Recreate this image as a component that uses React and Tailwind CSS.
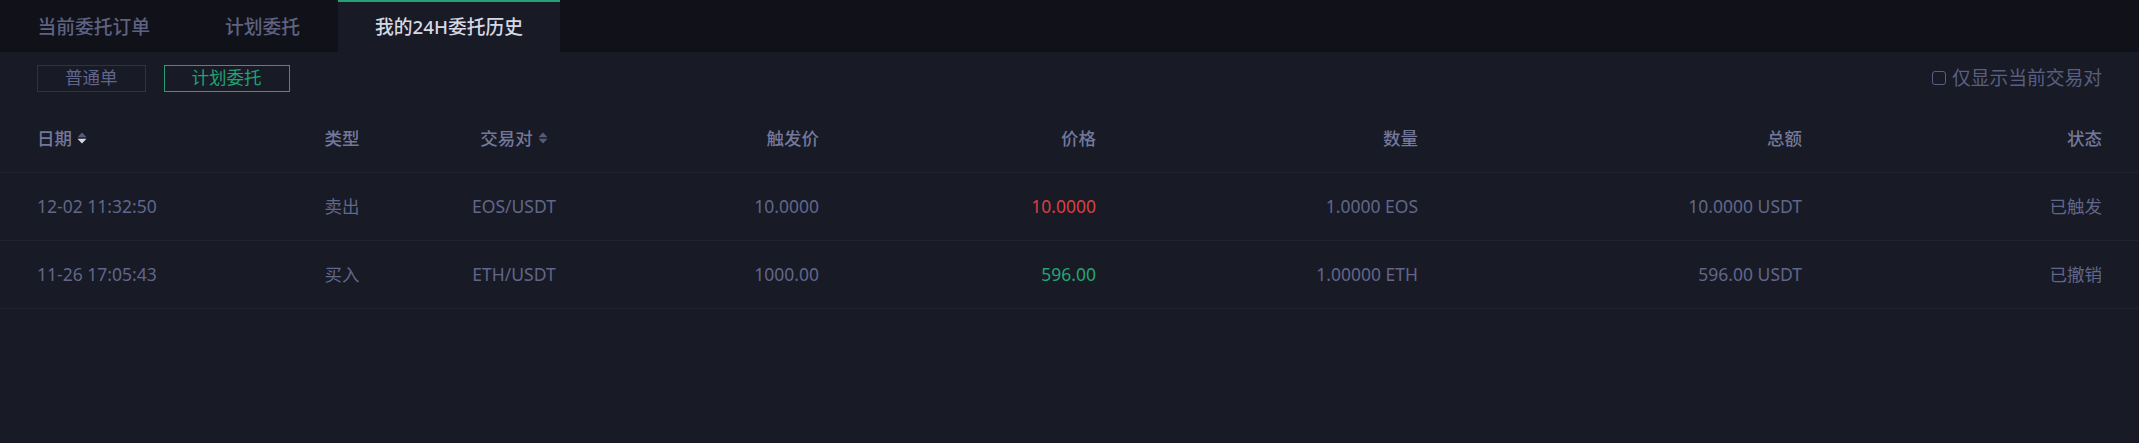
import { useState } from "react";

const cols = "grid grid-cols-[225px_160px_184px_213px_277px_322px_384px_300px]";

const rows = [
  {
    date: "12-02 11:32:50",
    type: "卖出",
    pair: "EOS/USDT",
    trigger: "10.0000",
    price: "10.0000",
    side: "sell",
    amount: "1.0000 EOS",
    total: "10.0000 USDT",
    status: "已触发",
  },
  {
    date: "11-26 17:05:43",
    type: "买入",
    pair: "ETH/USDT",
    trigger: "1000.00",
    price: "596.00",
    side: "buy",
    amount: "1.00000 ETH",
    total: "596.00 USDT",
    status: "已撤销",
  },
];

function SortIcon({ active }) {
  return (
    <svg width="10" height="12" viewBox="0 0 10 12" className="ml-[5px]">
      <path d="M5 0.5 L9.5 5.2 L0.5 5.2 Z" fill="#565b78" />
      <path d="M5 11.5 L9.5 6.8 L0.5 6.8 Z" fill={active ? "#d4d7e8" : "#565b78"} />
    </svg>
  );
}

function App() {
  const [tab, setTab] = useState(2);
  const [kind, setKind] = useState(1);
  const [onlyPair, setOnlyPair] = useState(false);

  const tabs = ["当前委托订单", "计划委托", "我的24H委托历史"];

  return (
    <div
      className="min-h-screen w-full bg-[#181a26] text-[#61668a]"
      style={{ fontFamily: '"Noto Sans", "Noto Sans CJK SC", sans-serif' }}
    >
      {/* tabs */}
      <div className="flex h-[52px] bg-[#111119]">
        {tabs.map((t, i) => (
          <button
            key={t}
            onClick={() => setTab(i)}
            className={
              i === tab
                ? "h-full px-[37.5px] text-[18.75px] font-medium text-[#d6d8e4] bg-[#181a26] border-t-[2.5px] border-[#23a172]"
                : "h-full px-[37.5px] text-[18.75px] font-medium text-[#5e6282] border-t-[2.5px] border-transparent"
            }
          >
            {t}
          </button>
        ))}
      </div>

      {/* filter bar */}
      <div className="flex h-[52px] items-center justify-between pl-[37px] pr-[37px]">
        <div className="flex gap-[18px]">
          {["普通单", "计划委托"].map((k, i) => (
            <button
              key={k}
              onClick={() => setKind(i)}
              className={
                i === kind
                  ? "h-[27px] px-[27px] text-[17.5px] leading-none border border-[#23a172] text-[#23a172]"
                  : "h-[27px] px-[27px] text-[17.5px] leading-none border border-[#2d3150] text-[#61668a]"
              }
            >
              {k}
            </button>
          ))}
        </div>
        <label className="flex items-center gap-[6px] text-[18.75px] text-[#5a5f80] cursor-pointer">
          <span
            onClick={() => setOnlyPair(!onlyPair)}
            className={
              onlyPair
                ? "w-[14px] h-[14px] rounded-[3px] border-[1.5px] border-[#23a172] bg-[#23a172]"
                : "w-[14px] h-[14px] rounded-[3px] border-[1.5px] border-[#5a5f80]"
            }
          />
          仅显示当前交易对
        </label>
      </div>

      {/* table */}
      <div className="pl-[37px] pr-[37px]">
        <div className={cols + " h-[68px] items-center text-[17.5px] font-medium text-[#73789a]"}>
          <div className="flex items-center">
            日期
            <SortIcon active />
          </div>
          <div className="text-center">类型</div>
          <div className="flex items-center justify-center">
            交易对
            <SortIcon />
          </div>
          <div className="text-right">触发价</div>
          <div className="text-right">价格</div>
          <div className="text-right">数量</div>
          <div className="text-right">总额</div>
          <div className="text-right">状态</div>
        </div>
      </div>

      {rows.map((r) => (
        <div key={r.date} className="border-t border-[#20232f] pl-[37px] pr-[37px]">
          <div className={cols + " h-[67px] items-center text-[17.5px]"}>
            <div>{r.date}</div>
            <div className="text-center">{r.type}</div>
            <div className="text-center">{r.pair}</div>
            <div className="text-right">{r.trigger}</div>
            <div className={r.side === "sell" ? "text-right text-[#d8403f]" : "text-right text-[#22a574]"}>
              {r.price}
            </div>
            <div className="text-right">{r.amount}</div>
            <div className="text-right">{r.total}</div>
            <div className="text-right">{r.status}</div>
          </div>
        </div>
      ))}
      <div className="border-t border-[#20232f]" />
    </div>
  );
}

export default App;
